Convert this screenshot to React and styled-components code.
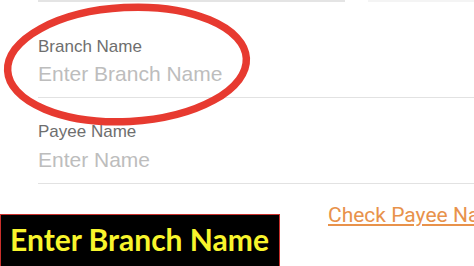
import React from "react";
import styled, { createGlobalStyle } from "styled-components";

const Global = createGlobalStyle`
  html, body { margin: 0; padding: 0; background: #ffffff; overflow: hidden; }
  body { width: 474px; height: 266px; font-family: "Liberation Sans", Arial, sans-serif; }
`;

const Page = styled.div`
  position: relative;
  width: 474px;
  height: 266px;
  overflow: hidden;
  background: #fff;
`;

const TopRules = styled.div`
  display: flex;
  gap: 23px;
  padding-left: 38px;
  height: 2px;
`;

const Rule = styled.div`
  width: ${(p) => p.$w}px;
  height: 100%;
  background: ${(p) => p.$c};
`;

const Form = styled.div`
  display: flex;
  flex-direction: column;
  padding-left: 38px;
`;

const Field = styled.div`
  display: flex;
  flex-direction: column;
  gap: ${(p) => p.$gap}px;
  padding-top: ${(p) => p.$top}px;
  padding-bottom: 11px;
  border-bottom: 1.5px solid #e2e2e2;
`;

const Label = styled.div`
  font-size: 17px;
  line-height: 20px;
  color: #6e6e6e;
`;

const Placeholder = styled.div`
  font-size: 21px;
  line-height: 24px;
  color: #bdbdbd;
`;

const BottomRow = styled.div`
  display: flex;
  align-items: flex-start;
  overflow: hidden;
`;

const Banner = styled.div`
  flex-shrink: 0;
  margin-top: 30px;
  width: 278px;
  height: 60px;
  background: #000;
  border: 1px solid #c9302c;
  border-bottom: none;
  box-sizing: content-box;
  display: flex;
  align-items: flex-start;
  overflow: hidden;
`;

const BannerText = styled.span`
  font-family: Lato, "Noto Sans", sans-serif;
  font-weight: 700;
  font-size: 30px;
  line-height: 40px;
  color: #f8f52c;
  padding-left: 9px;
  padding-top: 4px;
  white-space: nowrap;
`;

const Link = styled.a`
  flex-shrink: 0;
  margin-top: 19px;
  margin-left: 48px;
  font-family: Roboto, "Liberation Sans", sans-serif;
  font-size: 21px;
  line-height: 24px;
  color: #e8924b;
  text-decoration: underline;
  text-decoration-thickness: 1.5px;
  text-underline-offset: 2px;
  white-space: nowrap;
`;

const Circle = styled.svg`
  position: absolute;
  left: 0;
  top: 0;
  pointer-events: none;
`;

export default function App() {
  return (
    <Page>
      <Global />
      <TopRules>
        <Rule $w={307} $c="#e4e4e4" />
        <Rule $w={106} $c="#f4f4f4" />
      </TopRules>
      <Form>
        <Field $top={35} $gap={5}>
          <Label>Branch Name</Label>
          <Placeholder>Enter Branch Name</Placeholder>
        </Field>
        <Field $top={24} $gap={6}>
          <Label>Payee Name</Label>
          <Placeholder>Enter Name</Placeholder>
        </Field>
      </Form>
      <BottomRow>
        <Banner>
          <BannerText>Enter Branch Name</BannerText>
        </Banner>
        <Link>Check Payee Name</Link>
      </BottomRow>
      <Circle width="474" height="266" viewBox="0 0 474 266">
        <ellipse
          cx="127"
          cy="64.5"
          rx="119.5"
          ry="57"
          fill="none"
          stroke="#e73a30"
          strokeWidth="7.5"
          transform="rotate(-3 127 64.5)"
        />
      </Circle>
    </Page>
  );
}
